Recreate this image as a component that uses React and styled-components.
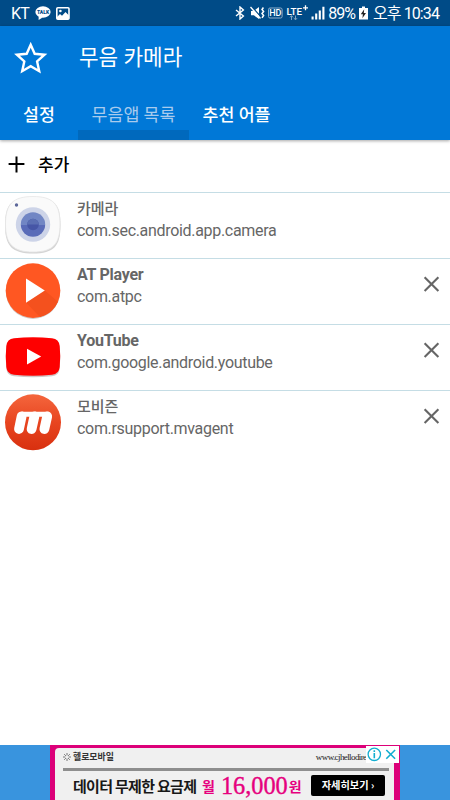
import React from "react";
import styled, { createGlobalStyle } from "styled-components";

const theme = {
  statusBar: "#004b87",
  primary: "#0078d7",
  indicator: "#0069bd",
  divider: "#c5dde5",
  grayText: "#666666",
  adBlue: "#3994de",
  pink: "#e6007e",
};

const GlobalStyle = createGlobalStyle`
  * {
    box-sizing: border-box;
  }
  body {
    margin: 0;
    background-color: #ffffff;
    font-family: Roboto, "Noto Sans CJK KR", sans-serif;
    overflow: hidden;
  }
  svg {
    display: block;
    flex-shrink: 0;
  }
`;

const Screen = styled.div`
  width: 450px;
  height: 800px;
  display: flex;
  flex-direction: column;
  overflow: hidden;
`;

const StatusBar = styled.div`
  height: 26px;
  flex-shrink: 0;
  display: flex;
  align-items: center;
  justify-content: space-between;
  padding: 0 11px;
  background-color: ${theme.statusBar};
  color: #ffffff;
`;

const StatusGroup = styled.div`
  display: flex;
  align-items: center;
  height: 26px;
`;

const StatusText = styled.span`
  font-size: 16px;
  line-height: 26px;
  letter-spacing: ${(props) => props.$spacing || 0}px;
  margin-left: ${(props) => props.$left || 0}px;
  padding-top: 2px;
  white-space: nowrap;
`;

const StatusIcon = styled.svg`
  margin-left: ${(props) => props.$left || 0}px;
`;

const Header = styled.div`
  height: 114px;
  flex-shrink: 0;
  background-color: ${theme.primary};
  color: #ffffff;
  box-shadow: 0 1px 3px rgba(0, 0, 0, 0.35);
`;

const TitleRow = styled.div`
  height: 64px;
  display: flex;
  align-items: center;
  padding-left: 14px;
`;

const Title = styled.h1`
  margin: 0 0 0 31px;
  font-size: 21.3px;
  font-weight: 400;
  line-height: 30px;
  white-space: nowrap;
`;

const Tabs = styled.div`
  height: 50px;
  display: flex;
`;

const Tab = styled.div`
  width: ${(props) => props.$width}px;
  height: 50px;
  padding-top: 11px;
  border-bottom: 10px solid
    ${(props) => (props.$active ? theme.indicator : "transparent")};
  color: ${(props) => (props.$active ? "#a9cbed" : "#ffffff")};
  font-size: 17.3px;
  font-weight: ${(props) => (props.$active ? 400 : 500)};
  line-height: 28px;
  text-align: center;
  white-space: nowrap;
`;

const AddRow = styled.div`
  height: 52px;
  flex-shrink: 0;
  display: flex;
  align-items: center;
  gap: 13px;
  padding: 0 0 3px 8px;
`;

const AddLabel = styled.span`
  font-size: 17px;
  font-weight: 500;
  line-height: 24px;
  color: #000000;
`;

const List = styled.div`
  flex: 1;
`;

const Row = styled.div`
  height: 65.85px;
  display: flex;
  align-items: flex-start;
  border-top: 1px solid ${theme.divider};
  padding: 3px 10px 0 5px;
`;

const RowText = styled.div`
  flex: 1;
  margin-left: 16px;
  padding-top: 2px;
  color: ${theme.grayText};
  white-space: nowrap;
`;

const AppName = styled.div`
  font-size: ${(props) => (props.$korean ? 15 : 16)}px;
  font-weight: ${(props) => (props.$korean ? 500 : 700)};
  letter-spacing: ${(props) => (props.$korean ? 0 : -0.25)}px;
  line-height: 22px;
`;

const PackageName = styled.div`
  font-size: 16px;
  letter-spacing: -0.31px;
  line-height: 21px;
`;

const CloseButton = styled.button`
  margin-top: 14px;
  padding: 0;
  border: 0;
  background: none;
`;

const AdBar = styled.div`
  height: 55px;
  flex-shrink: 0;
  display: flex;
  justify-content: center;
  background-color: ${theme.adBlue};
`;

const AdBanner = styled.div`
  position: relative;
  width: 350px;
  padding: 3px 6px 0 5px;
  background-color: #dc0079;
  font-family: "Noto Sans CJK KR", sans-serif;
`;

const AdPaper = styled.div`
  height: 52px;
  padding: 0 5px 0 8px;
  border-radius: 4px 4px 0 0;
  background-color: #f0f0f0;
`;

const AdTop = styled.div`
  height: 20px;
  display: flex;
  align-items: center;
  padding-bottom: 2px;
`;

const AdBrand = styled.span`
  margin-left: 2px;
  font-size: 8.9px;
  font-weight: 700;
  color: #333333;
  line-height: 14px;
`;

const AdUrl = styled.span`
  margin-left: 202px;
  font-family: "Liberation Serif", serif;
  font-size: 9px;
  letter-spacing: -0.6px;
  color: #222222;
  line-height: 14px;
  white-space: nowrap;
`;

const AdRule = styled.div`
  height: 3px;
  background-color: #8e8e8e;
`;

const AdBottom = styled.div`
  height: 29px;
  display: flex;
  align-items: center;
  padding-left: 10px;
`;

const AdCopy = styled.span`
  font-size: 15px;
  font-weight: 700;
  letter-spacing: -0.7px;
  color: #181818;
  line-height: 28px;
  white-space: nowrap;
`;

const AdPrice = styled.span`
  width: 101px;
  margin-left: auto;
  display: flex;
  align-items: center;
  color: ${theme.pink};
  font-size: 14px;
  font-weight: 700;
  line-height: 28px;
  white-space: nowrap;
`;

const AdNumber = styled.span`
  margin: 0 1px 0 6px;
  font-family: "Liberation Serif", serif;
  font-size: 24.3px;
  font-weight: 400;
  -webkit-text-stroke: 0.4px ${theme.pink};
`;

const AdButton = styled.span`
  width: 74px;
  height: 21px;
  margin: 0 4px 0 8px;
  border-radius: 2px;
  background-color: #000000;
  color: #ffffff;
  font-size: 10.2px;
  font-weight: 700;
  line-height: 20px;
  text-align: center;
  white-space: nowrap;
`;

const AdChoices = styled.div`
  position: absolute;
  top: 1px;
  right: 1px;
  width: 33px;
  height: 17px;
  background-color: #ffffff;
`;

const TalkIcon = () => (
  <StatusIcon $left={6} width="16" height="14" viewBox="0 0 16 14">
    <ellipse cx="8" cy="6" rx="7.6" ry="5.8" fill="#fff" />
    <path d="M3.6 10v4l4-2.6z" fill="#fff" />
    <text
      x="8"
      y="8"
      fontSize="5"
      fontWeight="900"
      fontFamily="Roboto, sans-serif"
      textAnchor="middle"
      fill={theme.statusBar}
    >
      TALK
    </text>
  </StatusIcon>
);

const PictureIcon = () => (
  <StatusIcon $left={5} width="14" height="13" viewBox="0 0 14 13">
    <rect x="0.8" y="0.8" width="12.2" height="11.4" rx="1" fill="none" stroke="#fff" strokeWidth="1.6" />
    <circle cx="4.4" cy="4" r="1.3" fill="#fff" />
    <path d="M1 10l3-3 2 1.7L9.5 5 13 8.5V12H1z" fill="#fff" />
  </StatusIcon>
);

const BluetoothIcon = () => (
  <StatusIcon width="10" height="14" viewBox="0 0 10 14">
    <path d="M1 4l7.4 6L5 13V1l3.4 3L1 10" fill="none" stroke="#fff" strokeWidth="1.4" />
  </StatusIcon>
);

const MuteIcon = () => (
  <StatusIcon $left={5} width="15" height="14" viewBox="0 0 15 14">
    <path d="M1 5h2.8L9 1v12L3.8 9.3H1z" fill="#fff" />
    <path d="M1.5 0.5l10 11" stroke={theme.statusBar} strokeWidth="1.2" />
    <path d="M0.5 1l10 11.5" stroke="#fff" strokeWidth="1.4" />
    <path d="M13.4 1.5l-1.4 2 1.6 2-1.6 2 1.6 2-1.6 2.4" fill="none" stroke="#fff" strokeWidth="1.5" />
  </StatusIcon>
);

const HdIcon = () => (
  <StatusIcon $left={3} width="15" height="12" viewBox="0 0 15 12">
    <rect x="0.5" y="1" width="13.6" height="10" rx="1.5" fill="none" stroke="#8fb0cb" />
    <text x="7.3" y="9.2" fontSize="9" fontWeight="500" fontFamily="Roboto, sans-serif" textAnchor="middle" fill="#fff">
      HD
    </text>
  </StatusIcon>
);

const LteIcon = () => (
  <StatusIcon $left={3} width="23" height="20" viewBox="0 0 23 20">
    <text x="0.5" y="11.5" fontSize="9.8" fontWeight="500" fontFamily="Roboto, sans-serif" fill="#fff">
      LTE
    </text>
    <path d="M19.5 2.3v5M17 4.8h5" stroke="#fff" strokeWidth="1.3" />
    <path d="M5.5 17v-4M4 14.3l1.5-1.7L7 14.3M9.5 12.5v4M8.1 15.2l1.4 1.7 1.5-1.7" fill="none" stroke="#7fa5c3" strokeWidth="1" />
  </StatusIcon>
);

const SignalIcon = () => (
  <StatusIcon $left={2} width="14" height="14" viewBox="0 0 14 14">
    <path d="M1.6 10.5v3M5.2 7.5v6M8.8 4.5v9M12.4 0.8v12.7" stroke="#fff" strokeWidth="2.1" />
  </StatusIcon>
);

const BatteryIcon = () => (
  <StatusIcon $left={4} width="9" height="14" viewBox="0 0 9 14">
    <path d="M3 0.5h3V2h3v11.5H0V2h3z" fill="#fff" />
    <path d="M5.2 3.2L1.8 8.3h2.1l-0.5 4 3.6-5.4H4.8z" fill="#222" />
  </StatusIcon>
);

const StarIcon = () => (
  <svg width="34" height="34" viewBox="0 0 34 34">
    <path
      d="M16.7 3.8l4 9 9.8 0.9-7.4 6.7 2.1 9.8-8.5-5-8.5 5 2.1-9.8-7.4-6.7 9.8-0.9z"
      fill="none"
      stroke="#fff"
      strokeWidth="2.4"
    />
  </svg>
);

const PlusIcon = () => (
  <svg width="17" height="17" viewBox="0 0 17 17">
    <path d="M8.5 0.6v15.8M0.6 8h15.8" stroke="#000" strokeWidth="2" />
  </svg>
);

const CloseIcon = () => (
  <svg width="17" height="17" viewBox="0 0 17 17">
    <path d="M1.6 1.3l13.8 13.8M15.4 1.3L1.6 15.1" stroke="#666" strokeWidth="2.1" />
  </svg>
);

const CameraLogo = () => (
  <svg width="56" height="58" viewBox="0 0 56 58">
    <defs>
      <linearGradient id="lens" x1="0" y1="0" x2="0" y2="1">
        <stop offset="0.5" stopColor="#7186c4" />
        <stop offset="0.5" stopColor="#596bb8" />
      </linearGradient>
    </defs>
    <path d="M28 1.5C49 1.5 55.5 8 55.5 29S49 57.5 28 57.5 0 50 0 29 7 1.5 28 1.5z" fill="#d4d4d4" />
    <path d="M28 0.5C48 0.5 55 8 55 28S48 56 28 56 0.5 48 0.5 28 8 0.5 28 0.5z" fill="#fafafa" stroke="#e6e6e6" strokeWidth="0.8" />
    <circle cx="11.5" cy="9" r="1.7" fill="#5c6799" />
    <circle cx="28" cy="28.5" r="17.2" fill="#cdd4e8" />
    <circle cx="28" cy="28.5" r="12.2" fill="url(#lens)" />
    <circle cx="28" cy="28.5" r="5.8" fill="#4656a6" />
    <path d="M22.2 28.5a5.8 5.8 0 0 1 11.6 0z" fill="#5b6fb3" />
  </svg>
);

const AtPlayerLogo = () => (
  <svg width="56" height="58" viewBox="0 0 56 58">
    <circle cx="28" cy="29.7" r="27.2" fill="#d0c8c5" />
    <circle cx="28" cy="28.6" r="27.3" fill="#ff5722" />
    <path d="M39.8 28.5L53 39.8A27.3 27.3 0 0 1 35 55L21 40.6z" fill="#f4511e" />
    <path d="M21 16.5v24.3l18.8-12.2z" fill="#fff" />
  </svg>
);

const YouTubeLogo = () => (
  <svg width="56" height="58" viewBox="0 0 56 58">
    <path d="M9 11.6Q28 9.8 47 11.6 54 12.3 54.7 19.5 55.8 29.5 54.7 40.5 54 47.4 47 48.3 28 50.1 9 48.3 2 47.4 1.3 40.5 0.2 29.5 1.3 19.5 2 12.3 9 11.6z" fill="#d0c7c7" />
    <path d="M9 10.2Q28 8.5 47 10.2 54 10.9 54.7 18 55.8 28.3 54.7 39 54 46 47 46.8 28 48.5 9 46.8 2 46 1.3 39 0.2 28.3 1.3 18 2 10.9 9 10.2z" fill="#fe0000" />
    <path d="M22 20.8v15.6l14.2-7.8z" fill="#fff" />
  </svg>
);

const MobizenLogo = () => (
  <svg width="56" height="58" viewBox="0 0 56 58">
    <defs>
      <linearGradient id="mobizen" x1="0" y1="0" x2="0" y2="1">
        <stop offset="0" stopColor="#f4663d" />
        <stop offset="0.5" stopColor="#e84520" />
        <stop offset="1" stopColor="#d8300f" />
      </linearGradient>
    </defs>
    <circle cx="28" cy="28.3" r="28" fill="url(#mobizen)" />
    <g fill="none" stroke="#fff" strokeLinecap="round">
      <path d="M14 35L16.6 22.4M26.6 35L29.4 22.4M39.4 35L42.2 22.4" strokeWidth="9.8" />
      <path d="M17 20.2H42" strokeWidth="5" />
    </g>
  </svg>
);

const BrandMark = () => (
  <svg width="8" height="8" viewBox="0 0 8 8">
    <path d="M4 0v2.4M4 5.6V8M0 4h2.4M5.6 4H8M1.2 1.2l1.7 1.7M5.1 5.1l1.7 1.7M6.8 1.2L5.1 2.9M2.9 5.1L1.2 6.8" stroke="#666" strokeWidth="0.9" />
  </svg>
);

const AdChoicesIcon = () => (
  <svg width="33" height="17" viewBox="0 0 33 17">
    <circle cx="8.3" cy="8.3" r="6.2" fill="none" stroke="#12add0" strokeWidth="1.3" />
    <path d="M8.3 4.3v1.7M8.3 7v5.2" stroke="#12add0" strokeWidth="1.6" />
    <path d="M20.3 4l8.8 8.8M29.1 4l-8.8 8.8" stroke="#12add0" strokeWidth="1.6" />
  </svg>
);

const apps = [
  { name: "카메라", pkg: "com.sec.android.app.camera", logo: CameraLogo, korean: true, locked: true },
  { name: "AT Player", pkg: "com.atpc", logo: AtPlayerLogo },
  { name: "YouTube", pkg: "com.google.android.youtube", logo: YouTubeLogo },
  { name: "모비즌", pkg: "com.rsupport.mvagent", logo: MobizenLogo, korean: true },
];

const App = () => {
  return (
    <Screen>
      <GlobalStyle />
      <StatusBar>
        <StatusGroup>
          <StatusText $spacing={-0.8}>KT</StatusText>
          <TalkIcon />
          <PictureIcon />
        </StatusGroup>
        <StatusGroup>
          <BluetoothIcon />
          <MuteIcon />
          <HdIcon />
          <LteIcon />
          <SignalIcon />
          <StatusText $left={3} $spacing={-1}>
            89%
          </StatusText>
          <BatteryIcon />
          <StatusText $left={5} $spacing={-0.9}>
            오후 10:34
          </StatusText>
        </StatusGroup>
      </StatusBar>

      <Header>
        <TitleRow>
          <StarIcon />
          <Title>무음 카메라</Title>
        </TitleRow>
        <Tabs>
          <Tab $width={78}>설정</Tab>
          <Tab $width={111} $active>
            무음앱 목록
          </Tab>
          <Tab $width={95}>추천 어플</Tab>
        </Tabs>
      </Header>

      <AddRow>
        <PlusIcon />
        <AddLabel>추가</AddLabel>
      </AddRow>

      <List>
        {apps.map(({ name, pkg, logo: Logo, korean, locked }) => (
          <Row key={pkg}>
            <Logo />
            <RowText>
              <AppName $korean={korean}>{name}</AppName>
              <PackageName>{pkg}</PackageName>
            </RowText>
            {!locked && (
              <CloseButton>
                <CloseIcon />
              </CloseButton>
            )}
          </Row>
        ))}
      </List>

      <AdBar>
        <AdBanner>
          <AdPaper>
            <AdTop>
              <BrandMark />
              <AdBrand>헬로모바일</AdBrand>
              <AdUrl>www.cjhellodire</AdUrl>
            </AdTop>
            <AdRule />
            <AdBottom>
              <AdCopy>데이터 무제한 요금제</AdCopy>
              <AdPrice>
                월<AdNumber>16,000</AdNumber>원
              </AdPrice>
              <AdButton>자세히보기 ›</AdButton>
            </AdBottom>
          </AdPaper>
          <AdChoices>
            <AdChoicesIcon />
          </AdChoices>
        </AdBanner>
      </AdBar>
    </Screen>
  );
};

export default App;
